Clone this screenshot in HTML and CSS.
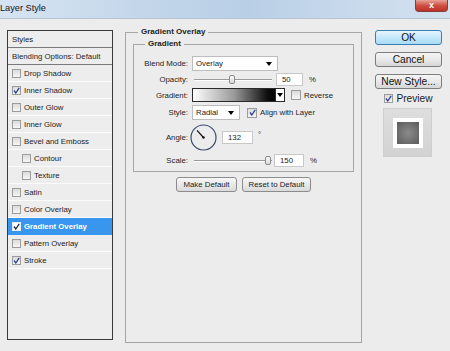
FILE: index.html
```html
<!DOCTYPE html>
<html>
<head>
<meta charset="utf-8">
<link rel="stylesheet" href="styles.css">
</head>
<body>
<div class="titlebar">
  <span class="title">Layer Style</span>
  <span class="close">x</span>
</div>
<div class="content">
  <div class="styles">
    <div class="srow head">Styles</div>
    <div class="srow head">Blending Options: Default</div>
    <div class="srow"><span class="cb"></span>Drop Shadow</div>
    <div class="srow"><span class="cb"><svg viewBox="0 0 7 7"><polyline points="1,3.5 2.8,6 6.2,0.8"/></svg></span>Inner Shadow</div>
    <div class="srow"><span class="cb"></span>Outer Glow</div>
    <div class="srow"><span class="cb"></span>Inner Glow</div>
    <div class="srow"><span class="cb"></span>Bevel and Emboss</div>
    <div class="srow sub"><span class="cb"></span>Contour</div>
    <div class="srow sub"><span class="cb"></span>Texture</div>
    <div class="srow"><span class="cb"></span>Satin</div>
    <div class="srow"><span class="cb"></span>Color Overlay</div>
    <div class="srow sel"><span class="cb"><svg viewBox="0 0 7 7"><polyline points="1,3.5 2.8,6 6.2,0.8"/></svg></span>Gradient Overlay</div>
    <div class="srow"><span class="cb"></span>Pattern Overlay</div>
    <div class="srow"><span class="cb"><svg viewBox="0 0 7 7"><polyline points="1,3.5 2.8,6 6.2,0.8"/></svg></span>Stroke</div>
  </div>

  <fieldset class="outer">
    <legend>Gradient Overlay</legend>
    <fieldset class="inner">
      <legend>Gradient</legend>
      <div class="grid">
        <span class="lbl">Blend Mode:</span>
        <div class="ctl"><div class="select wide"><span>Overlay</span><i class="arrow"></i></div></div>

        <span class="lbl">Opacity:</span>
        <div class="ctl">
          <div class="slider"><i class="thumb t-opacity"></i></div>
          <div class="num n-op">50</div><span class="unit">%</span>
        </div>

        <span class="lbl">Gradient:</span>
        <div class="ctl">
          <div class="grad"></div><div class="gbtn"><i class="arrow"></i></div>
          <span class="cb cb-rev"></span><span>Reverse</span>
        </div>

        <span class="lbl">Style:</span>
        <div class="ctl">
          <div class="select narrow"><span>Radial</span><i class="arrow"></i></div>
          <span class="cb cb-align"><svg viewBox="0 0 7 7"><polyline points="1,3.5 2.8,6 6.2,0.8"/></svg></span><span>Align with Layer</span>
        </div>

        <span class="lbl">Angle:</span>
        <div class="ctl">
          <svg class="dial" viewBox="0 0 27 27"><circle cx="13.5" cy="13.5" r="12.5"/><line x1="13.5" y1="13.5" x2="7" y2="6.3"/><circle class="dot" cx="13.5" cy="13.5" r="1.2"/></svg>
          <div class="num n-ang">132</div><span class="deg">°</span>
        </div>

        <span class="lbl">Scale:</span>
        <div class="ctl">
          <div class="slider"><i class="thumb t-scale"></i></div>
          <div class="num n-sc">150</div><span class="unit">%</span>
        </div>
      </div>
    </fieldset>
    <div class="btnrow">
      <button class="btn b-make">Make Default</button>
      <button class="btn b-reset">Reset to Default</button>
    </div>
  </fieldset>

  <div class="side">
    <button class="sbtn ok">OK</button>
    <button class="sbtn">Cancel</button>
    <button class="sbtn">New Style...</button>
    <div class="prevrow"><span class="cb"><svg viewBox="0 0 7 7"><polyline points="1,3.5 2.8,6 6.2,0.8"/></svg></span>Preview</div>
    <div class="preview"><div class="pwhite"><div class="pgray"></div></div></div>
  </div>
</div>
</body>
</html>
```
FILE: styles.css
```css
* { box-sizing: border-box; }
body {
  margin: 0;
  width: 450px;
  height: 351px;
  overflow: hidden;
  background: #ececec;
  font-family: "Liberation Sans", Arial, sans-serif;
  font-size: 7.8px;
  color: #1c1c1c;
}
.titlebar {
  height: 19px;
  display: flex;
  justify-content: space-between;
  align-items: flex-start;
  background: linear-gradient(90deg, #d6e4f2, #c4d7ea 30%, #b9cfe6 55%, #c9daec 80%, #d3e2f0);
  border-bottom: 1px solid #b4c4d6;
}
.title {
  font-size: 9.2px;
  line-height: 17px;
  color: #141414;
}
.close {
  width: 33px;
  height: 12px;
  margin-right: 2px;
  background: linear-gradient(#e8a397, #cf4f43 50%, #bb3428);
  border: 1px solid #8c3c35;
  border-top: none;
  border-radius: 0 0 4px 4px;
  color: #fff;
  font-weight: bold;
  font-size: 9px;
  line-height: 10px;
  text-align: center;
}
.content {
  display: flex;
  align-items: flex-start;
  padding-left: 7px;
}
.styles {
  margin-top: 11px;
  width: 106px;
  height: 310px;
  border: 1px solid #3a3a3a;
  background: #ededed;
}
.srow {
  height: 17px;
  border-bottom: 1px solid #fbfbfb;
  display: flex;
  align-items: center;
  padding-left: 4px;
  white-space: nowrap;
}
.srow.head { border-bottom-color: #7a7a7a; }
.srow.sub { padding-left: 14px; }
.srow.sel {
  background: #3996ee;
  color: #fff;
  font-weight: bold;
  border-bottom-color: #3996ee;
}
.cb {
  width: 9px;
  height: 9px;
  border: 1px solid #9c9c9c;
  background: linear-gradient(#dadada, #f6f6f6);
  margin-right: 3px;
  display: flex;
  align-items: center;
  justify-content: center;
  flex-shrink: 0;
}
.cb svg { width: 7px; height: 7px; }
.cb polyline {
  fill: none;
  stroke: #2d4595;
  stroke-width: 1.3;
}
.sel .cb { background: #fff; border-color: #e8e8e8; }
.sel .cb polyline { stroke: #1a2a60; }

.outer {
  margin: 8px 0 0 12px;
  padding: 0;
  width: 237px;
  height: 316px;
  border: 1px solid #a6a6a6;
  min-inline-size: 0;
}
.outer > legend {
  font-weight: bold;
  font-size: 8px;
  line-height: 10px;
  padding: 0 3px;
  margin-left: 12px;
}
.inner {
  margin: 2px 7px 0 7px;
  padding: 7px 0 4px 0;
  border: 1px solid #a6a6a6;
  min-inline-size: 0;
}
.inner > legend {
  font-weight: bold;
  font-size: 8px;
  line-height: 10px;
  padding: 0 3px;
  margin-left: 11px;
}
.grid {
  display: grid;
  grid-template-columns: 54px 1fr;
  grid-template-rows: 15px 13px 14px 17px 28px 14px;
  column-gap: 4px;
  row-gap: 2px;
}
.lbl {
  text-align: right;
  align-self: center;
  white-space: nowrap;
}
.ctl {
  display: flex;
  align-items: center;
  white-space: nowrap;
}
.select {
  height: 15px;
  background: #fff;
  border: 1px solid #bdbdbd;
  display: flex;
  align-items: center;
  justify-content: space-between;
  padding: 0 5px 0 3px;
}
.select.wide { width: 86px; }
.select.narrow { width: 48px; }
.arrow {
  display: block;
  width: 0;
  height: 0;
  border-left: 3px solid transparent;
  border-right: 3px solid transparent;
  border-top: 4px solid #000;
}
.slider {
  position: relative;
  width: 78px;
  height: 11px;
  margin-left: 2px;
  background: linear-gradient(transparent 5px, #9a9a9a 5px, #9a9a9a 6px, #fff 6px, #fff 7px, transparent 7px);
}
.thumb {
  position: absolute;
  top: 1px;
  width: 6px;
  height: 9px;
  border: 1px solid #8a8a8a;
  border-radius: 2px;
  background: linear-gradient(#fafafa, #dcdcdc);
}
.t-opacity { left: 35px; }
.t-scale { left: 71px; }
.num {
  height: 13px;
  background: #fff;
  border: 1px solid #c8c8c8;
  padding-left: 5px;
  line-height: 11px;
}
.n-op { width: 27px; margin-left: 4px; }
.n-sc { width: 30px; margin-left: 2px; }
.n-ang { width: 31px; margin-left: 5px; }
.unit { margin-left: 6px; }
.deg { margin-left: 5px; margin-top: -6px; }
.grad {
  width: 84px;
  height: 14px;
  border: 1px solid #2a2a2a;
  background: linear-gradient(90deg, #fff, #9a9a9a 50%, #111 90%, #000);
}
.gbtn {
  width: 9px;
  height: 14px;
  border: 1px solid #2a2a2a;
  border-left: none;
  background: #fff;
  display: flex;
  align-items: center;
  justify-content: center;
}
.cb-rev { margin-left: 6px; width: 10px; height: 10px; }
.cb-align { margin-left: 7px; width: 10px; height: 10px; }
.dial {
  width: 27px;
  height: 27px;
  margin-left: -2px;
}
.dial circle {
  fill: none;
  stroke: #3b4a6b;
  stroke-width: 1.2;
}
.dial line {
  stroke: #111;
  stroke-width: 1.2;
}
.dial .dot { fill: #111; stroke: none; }
.btnrow {
  display: flex;
  justify-content: center;
  gap: 5px;
  margin-top: 5px;
}
.btn {
  height: 15px;
  padding: 0;
  font-family: inherit;
  font-size: 7.8px;
  color: #1c1c1c;
  border: 1px solid #8c8c8c;
  border-radius: 3px;
  background: linear-gradient(#f7f7f7, #e9e9e9 50%, #dadada);
}
.b-make { width: 61px; }
.b-reset { width: 69px; }
.side {
  margin: 11px 0 0 13px;
  width: 67px;
  display: flex;
  flex-direction: column;
}
.sbtn {
  height: 15px;
  margin-bottom: 7px;
  padding: 0;
  font-family: inherit;
  font-size: 10.2px;
  color: #111;
  border: 1px solid #7d7d7d;
  border-radius: 3px;
  background: linear-gradient(#f4f4f4, #e9e9e9 50%, #d6d6d6);
  white-space: nowrap;
}
.sbtn.ok {
  border-color: #3a7fb2;
  background: linear-gradient(#e6f5fd, #c6e8fb 50%, #a9dbf6);
}
.prevrow {
  margin-top: -3px;
  height: 11px;
  display: flex;
  align-items: center;
  justify-content: center;
  font-size: 10.2px;
}
.preview {
  margin: 4px 0 0 8px;
  width: 49px;
  height: 49px;
  background: linear-gradient(#dedede, #d2d2d2);
  border: 1px solid #cfcfcf;
  display: flex;
  align-items: center;
  justify-content: center;
}
.pwhite {
  width: 30px;
  height: 30px;
  background: #fff;
  display: flex;
  align-items: center;
  justify-content: center;
}
.pgray {
  width: 22px;
  height: 22px;
  background: radial-gradient(#8a8a8a, #6a6a6a 70%, #5a5a5a);
}
```
